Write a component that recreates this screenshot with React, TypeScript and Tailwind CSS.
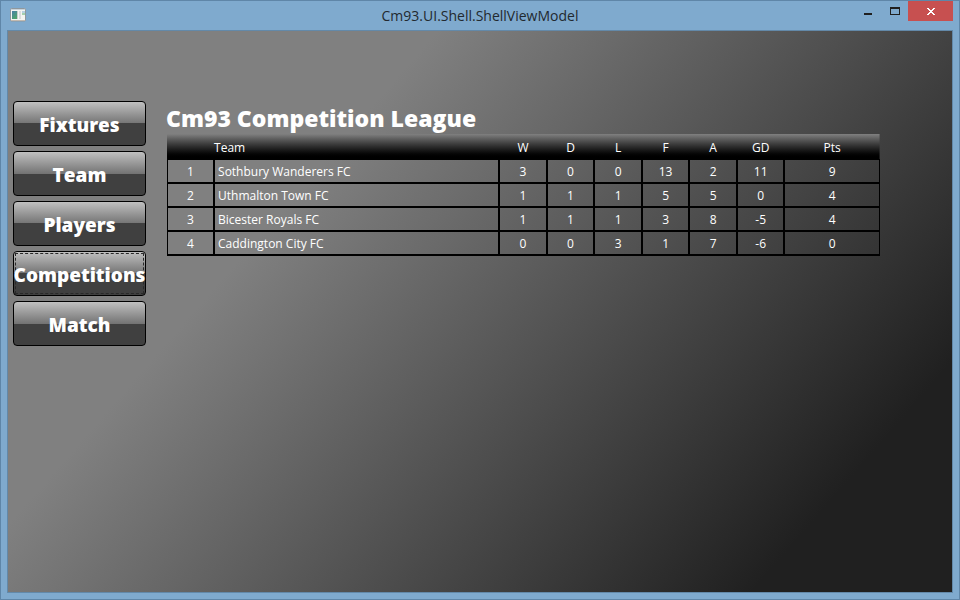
const navItems = ['Fixtures', 'Team', 'Players', 'Competitions', 'Match'];

const columns = ['W', 'D', 'L', 'F', 'A', 'GD', 'Pts'];

const standings = [
  { team: 'Sothbury Wanderers FC', stats: [3, 0, 0, 13, 2, 11, 9] },
  { team: 'Uthmalton Town FC', stats: [1, 1, 1, 5, 5, 0, 4] },
  { team: 'Bicester Royals FC', stats: [1, 1, 1, 3, 8, -5, 4] },
  { team: 'Caddington City FC', stats: [0, 0, 3, 1, 7, -6, 0] },
];

function AppIcon() {
  return (
    <svg width="16" height="14" viewBox="0 0 16 14" aria-hidden="true">
      <defs>
        <linearGradient id="pane" x1="0" y1="0" x2="0.6" y2="1">
          <stop offset="0" stopColor="#4a7fa8" />
          <stop offset="1" stopColor="#4fa36c" />
        </linearGradient>
      </defs>
      <rect x="0.5" y="0.5" width="15" height="12.5" rx="1" fill="#f4f4f2" stroke="#8f979c" />
      <rect x="1" y="1" width="14" height="1" fill="#c9d3da" />
      <rect x="2" y="3" width="5" height="8" fill="url(#pane)" />
      <rect x="7" y="3" width="1" height="8" fill="#c8cccc" />
      <rect x="9" y="3" width="2" height="8" fill="#dcdcdc" />
      <rect x="12" y="3" width="3" height="2" fill="#b5cfe0" />
      <rect x="12" y="5" width="3" height="2" fill="#a4d0ae" />
      <rect x="1" y="12" width="14" height="1" fill="#c3b9ae" />
    </svg>
  );
}

function TitleBar() {
  return (
    <header className="grid h-[29px] grid-cols-[1fr_auto_1fr] items-start px-[6px]">
      <div className="pt-[7px] pl-[3px]">
        <AppIcon />
      </div>
      <h1 className="text-sm leading-[29px] text-[#22292f]">Cm93.UI.Shell.ShellViewModel</h1>
      <div className="flex justify-end">
        <button type="button" aria-label="Minimize" className="flex h-5 w-[27px] items-center justify-center">
          <svg width="8" height="20" viewBox="0 0 8 20" aria-hidden="true">
            <rect x="0" y="12" width="8" height="2" fill="#1f1f1f" />
          </svg>
        </button>
        <button type="button" aria-label="Maximize" className="flex h-5 w-[27px] items-center justify-center">
          <svg width="10" height="20" viewBox="0 0 10 20" aria-hidden="true">
            <path d="M0 6H10V14H0ZM1 8V13H9V8Z" fill="#1f1f1f" fillRule="evenodd" />
          </svg>
        </button>
        <button type="button" aria-label="Close" className="flex h-5 w-[45px] items-center justify-center bg-[#c75050]">
          <svg width="8" height="7" viewBox="0 0 8 7" shapeRendering="crispEdges" aria-hidden="true">
            <path
              d="M0 0h2v1h1v1h2v-1h1v-1h2v1h-1v1h-1v1h-1v1h1v1h1v1h1v1h-2v-1h-1v-1h-2v1h-1v1h-2v-1h1v-1h1v-1h1v-1h-1v-1h-1v-1h-1z"
              fill="#ffffff"
            />
          </svg>
        </button>
      </div>
    </header>
  );
}

function NavButton({ label, focused }: { label: string; focused: boolean }) {
  return (
    <button
      type="button"
      className="relative flex h-[45px] w-full items-center justify-center rounded border border-black bg-[linear-gradient(#c0c0c0_0%,#747474_50%,#404040_50%,#404040_100%)] pt-1 text-[19px] font-extrabold text-white"
    >
      {focused && <span className="absolute inset-px border border-dashed border-[#2a2a2a]" />}
      <span className="relative">{label}</span>
    </button>
  );
}

function LeagueTable() {
  return (
    <table
      aria-labelledby="league"
      className="w-full table-fixed border-separate border-spacing-0 border-b border-black text-center text-xs text-white"
    >
      <colgroup>
        <col className="w-[6.6%]" />
        <col className="w-[40%]" />
        <col className="w-[6.667%]" />
        <col className="w-[6.667%]" />
        <col className="w-[6.667%]" />
        <col className="w-[6.667%]" />
        <col className="w-[6.667%]" />
        <col className="w-[6.667%]" />
        <col />
      </colgroup>
      <thead>
        <tr className="h-[25px] bg-linear-to-b from-[#808080] to-black">
          <th className="p-0" aria-label="Position" />
          <th className="p-0 pt-[2px] text-left font-normal">Team</th>
          {columns.map((name) => (
            <th key={name} className="p-0 pt-[2px] font-normal">
              {name}
            </th>
          ))}
        </tr>
      </thead>
      <tbody>
        {standings.map((row, index) => (
          <tr key={row.team} className="h-6">
            <td className="border border-black p-0 pt-[2px]">{index + 1}</td>
            <td className="border border-black p-0 pt-[2px] pl-[3px] text-left">{row.team}</td>
            {row.stats.map((value, i) => (
              <td key={columns[i]} className="border border-black p-0 pt-[2px]">
                {value}
              </td>
            ))}
          </tr>
        ))}
      </tbody>
    </table>
  );
}

export default function App() {
  return (
    <div className="flex h-screen flex-col border border-[#5f86a8] bg-[#7faace] font-['Open_Sans','Noto_Sans',sans-serif]">
      <TitleBar />
      <div className="flex flex-1 px-[6px] pb-[6px]">
        <div className="flex flex-1 items-start gap-5 border border-[#6389a9] bg-[linear-gradient(131deg,#808080_30%,#202020_86%)] pt-[70px] pr-[72px] pl-[5px]">
          <nav className="flex w-[133px] shrink-0 flex-col gap-[5px]">
            {navItems.map((label) => (
              <NavButton key={label} label={label} focused={label === 'Competitions'} />
            ))}
          </nav>
          <main className="min-w-0 flex-1">
            <h2 id="league" className="pt-[2px] text-[23px] leading-[31px] font-extrabold text-white">
              Cm93 Competition League
            </h2>
            <div className="pl-px">
              <LeagueTable />
            </div>
          </main>
        </div>
      </div>
    </div>
  );
}
